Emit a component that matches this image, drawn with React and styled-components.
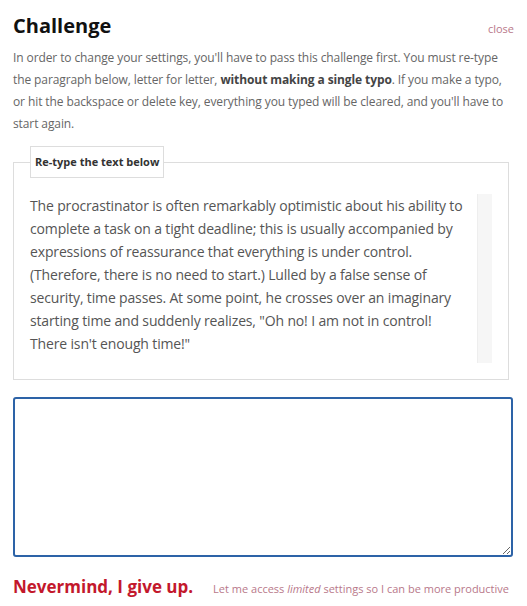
import React from "react";
import styled, { createGlobalStyle } from "styled-components";

const Global = createGlobalStyle`
  html, body { margin: 0; padding: 0; background: #fff; }
  body { font-family: "Open Sans", "Liberation Sans", sans-serif; }
  * { box-sizing: border-box; }
`;

const Page = styled.div`
  width: 527px;
  padding: 11px 13px 0 13px;
  display: flex;
  flex-direction: column;
`;

const Header = styled.div`
  display: flex;
  justify-content: space-between;
  align-items: baseline;
`;

const Title = styled.h1`
  margin: 0;
  font-size: 20px;
  line-height: 30px;
  font-weight: 700;
  color: #111;
`;

const CloseLink = styled.a`
  font-size: 11px;
  color: #b8788a;
  text-decoration: none;
  cursor: pointer;
`;

const Intro = styled.p`
  margin: 6px 0 0 0;
  font-size: 12px;
  line-height: 22px;
  color: #666;
  letter-spacing: -0.1px;
  b { color: #444; font-weight: 700; }
`;

const Fieldset = styled.fieldset`
  margin: 11px 5px 0 0;
  padding: 16px 16px 16px 16px;
  border: 1px solid #ddd;
  min-width: 0;
`;

const Legend = styled.legend`
  padding: 8px 4px 8px 4px;
  border: 1px solid #ddd;
  font-size: 11px;
  line-height: 14px;
  font-weight: 700;
  color: #333;
  background: #fff;
`;

const Scroller = styled.div`
  display: flex;
  gap: 8px;
  height: 169px;
`;

const Passage = styled.p`
  margin: 0;
  flex: 1;
  font-size: 14px;
  line-height: 23px;
  color: #555;
  letter-spacing: -0.15px;
`;

const Track = styled.div`
  width: 15px;
  background: #f6f6f6;
  border-left: 1px solid #eee;
`;

const Entry = styled.textarea`
  margin-top: 17px;
  width: 500px;
  height: 160px;
  border: 2px solid #2d63a7;
  border-radius: 3px;
  outline: none;
  resize: vertical;
  font-family: inherit;
  font-size: 14px;
  padding: 6px;
`;

const Footer = styled.div`
  display: flex;
  justify-content: space-between;
  align-items: baseline;
  margin-top: 18px;
  padding-right: 5px;
`;

const GiveUp = styled.a`
  font-size: 17px;
  font-weight: 700;
  color: #c3182c;
  text-decoration: none;
  cursor: pointer;
`;

const Limited = styled.a`
  font-size: 11px;
  color: #b8788a;
  text-decoration: none;
  cursor: pointer;
`;

export default function App() {
  return (
    <>
      <Global />
      <Page>
        <Header>
          <Title>Challenge</Title>
          <CloseLink>close</CloseLink>
        </Header>
        <Intro>
          In order to change your settings, you'll have to pass this challenge first. You must re-type the
          paragraph below, letter for letter, <b>without making a single typo</b>. If you make a typo, or hit
          the backspace or delete key, everything you typed will be cleared, and you'll have to start again.
        </Intro>
        <Fieldset>
          <Legend>Re-type the text below</Legend>
          <Scroller>
            <Passage>
              The procrastinator is often remarkably optimistic about his ability to complete a task on a
              tight deadline; this is usually accompanied by expressions of reassurance that everything is
              under control. (Therefore, there is no need to start.) Lulled by a false sense of security,
              time passes. At some point, he crosses over an imaginary starting time and suddenly realizes,
              "Oh no! I am not in control! There isn't enough time!"
            </Passage>
            <Track />
          </Scroller>
        </Fieldset>
        <Entry />
        <Footer>
          <GiveUp>Nevermind, I give up.</GiveUp>
          <Limited>
            Let me access <i>limited</i> settings so I can be more productive
          </Limited>
        </Footer>
      </Page>
    </>
  );
}
